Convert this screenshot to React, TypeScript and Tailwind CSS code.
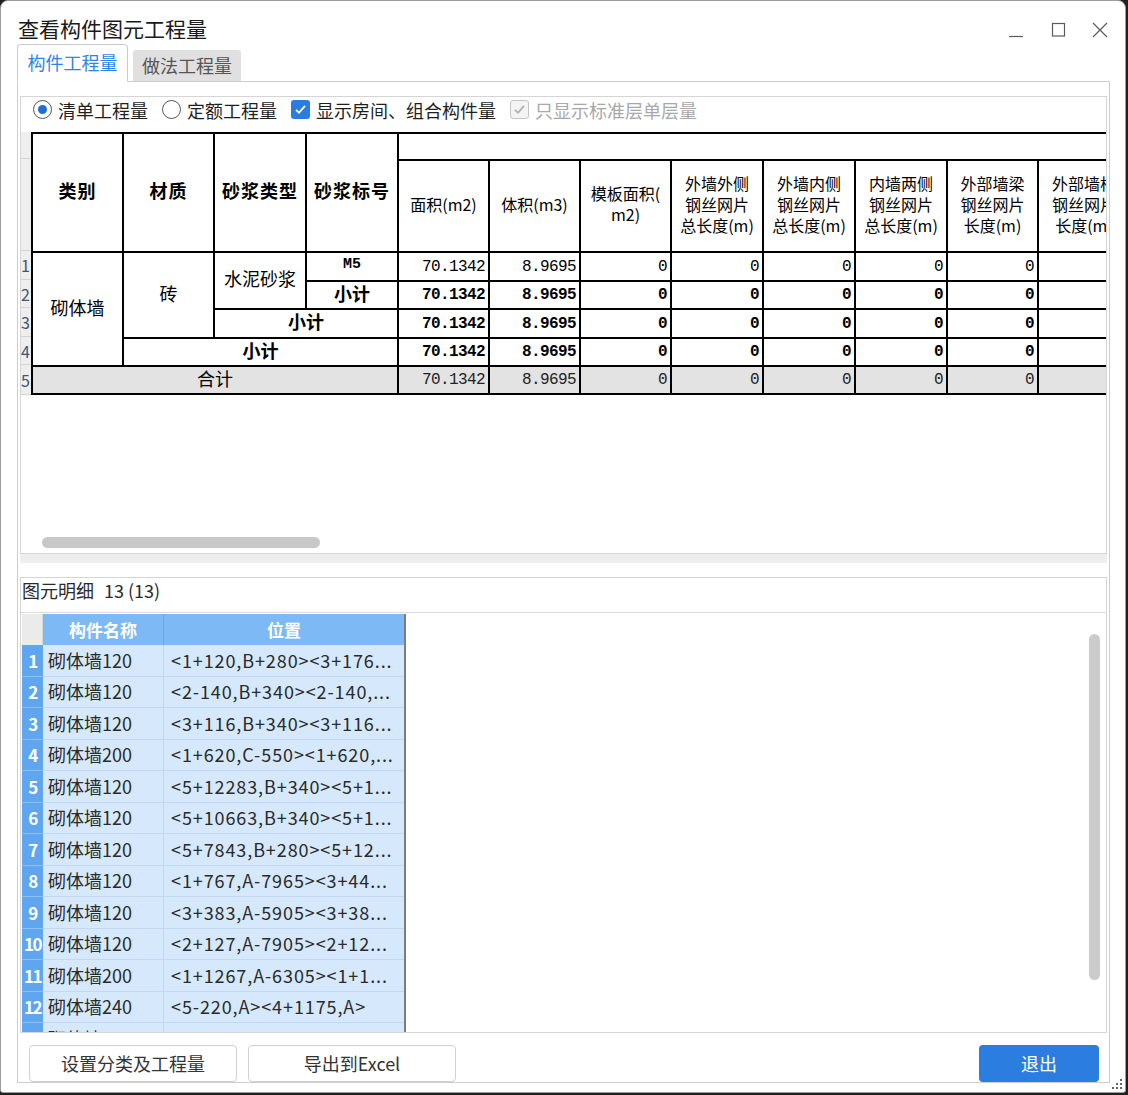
import React from 'react';

const gridCols = 'grid-cols-[89px_89px_90px_90px_89px_89px_89px_90px_90px_90px_89px_90px]';
const gridRows = 'grid-rows-[25px_90px_27px_26px_27px_26px_26px]';

const valueCols = ['col-start-5', 'col-start-6', 'col-start-7', 'col-start-8', 'col-start-9', 'col-start-10', 'col-start-11', 'col-start-12'];
const valueRows = ['row-start-3', 'row-start-4', 'row-start-5', 'row-start-6', 'row-start-7'];
const values = ['70.1342', '8.9695', '0', '0', '0', '0', '0', '0'];

const headCols: { col: string; lines: string[] }[] = [
  { col: 'col-start-5', lines: ['面积(m2)'] },
  { col: 'col-start-6', lines: ['体积(m3)'] },
  { col: 'col-start-7', lines: ['模板面积(', 'm2)'] },
  { col: 'col-start-8', lines: ['外墙外侧', '钢丝网片', '总长度(m)'] },
  { col: 'col-start-9', lines: ['外墙内侧', '钢丝网片', '总长度(m)'] },
  { col: 'col-start-10', lines: ['内墙两侧', '钢丝网片', '总长度(m)'] },
  { col: 'col-start-11', lines: ['外部墙梁', '钢丝网片', '长度(m)'] },
  { col: 'col-start-12', lines: ['外部墙柱', '钢丝网片', '长度(m)'] },
];

const details = [
  ['砌体墙120', '<1+120,B+280><3+176...'],
  ['砌体墙120', '<2-140,B+340><2-140,...'],
  ['砌体墙120', '<3+116,B+340><3+116...'],
  ['砌体墙200', '<1+620,C-550><1+620,...'],
  ['砌体墙120', '<5+12283,B+340><5+1...'],
  ['砌体墙120', '<5+10663,B+340><5+1...'],
  ['砌体墙120', '<5+7843,B+280><5+12...'],
  ['砌体墙120', '<1+767,A-7965><3+44...'],
  ['砌体墙120', '<3+383,A-5905><3+38...'],
  ['砌体墙120', '<2+127,A-7905><2+12...'],
  ['砌体墙200', '<1+1267,A-6305><1+1...'],
  ['砌体墙240', '<5-220,A><4+1175,A>'],
  ['砌体墙120', '<4+1175,A><5-220,...'],
];

function Radio({ checked, label }: { checked?: boolean; label: string }) {
  return (
    <div className="flex items-center gap-[6px]">
      <span className="w-[19px] h-[19px] rounded-full border border-[#555] bg-white flex items-center justify-center">
        {checked && <span className="w-[9px] h-[9px] rounded-full bg-[#1f6fd6]" />}
      </span>
      <span className="text-[18px] leading-[24px] text-[#1f1f1f]">{label}</span>
    </div>
  );
}

function Check({ label, disabled }: { label: string; disabled?: boolean }) {
  return (
    <div className="flex items-center gap-[6px]">
      <span
        className={
          disabled
            ? 'w-[19px] h-[19px] rounded-[3px] border border-[#c4c4c4] bg-[#f4f4f4] flex items-center justify-center'
            : 'w-[19px] h-[19px] rounded-[3px] bg-[#2b7be0] flex items-center justify-center'
        }
      >
        <svg width="13" height="13" viewBox="0 0 13 13" fill="none">
          <path d="M2 6.8l3 3 6-7" stroke={disabled ? '#b0b0b0' : '#ffffff'} strokeWidth="1.8" />
        </svg>
      </span>
      <span className={disabled ? 'text-[18px] leading-[24px] text-[#a8a8a8]' : 'text-[18px] leading-[24px] text-[#1f1f1f]'}>
        {label}
      </span>
    </div>
  );
}

function UpperGrid() {
  const cell = 'bg-white flex items-center justify-center text-black';
  const head = `${cell} text-[18px] font-bold tracking-[1px] pb-[5px]`;
  const cjk = `${cell} text-[18px] pb-[4px]`;
  const num = 'font-["Liberation_Mono",monospace] text-[16px] tracking-[-0.6px] flex items-center justify-end pr-[3px]';
  return (
    <div className={`grid ${gridCols} ${gridRows} gap-[2px] bg-black border-2 border-black shrink-0 w-max`}>
      <div className={`${head} col-start-1 row-start-1 row-span-2`}>类别</div>
      <div className={`${head} col-start-2 row-start-1 row-span-2`}>材质</div>
      <div className={`${head} col-start-3 row-start-1 row-span-2`}>砂浆类型</div>
      <div className={`${head} col-start-4 row-start-1 row-span-2`}>砂浆标号</div>
      <div className={`${cell} col-start-5 col-span-8 row-start-1`} />
      {headCols.map((h) => (
        <div key={h.col} className={`${cell} ${h.col} row-start-2 flex-col text-[16px] leading-[21px] pb-[4px]`}>
          {h.lines.map((l) => (
            <span key={l} className="whitespace-nowrap">{l}</span>
          ))}
        </div>
      ))}

      <div className={`${cjk} col-start-1 row-start-3 row-span-4`}>砌体墙</div>
      <div className={`${cjk} col-start-2 row-start-3 row-span-3`}>砖</div>
      <div className={`${cjk} col-start-3 row-start-3 row-span-2`}>水泥砂浆</div>
      <div className={`${cell} col-start-4 row-start-3 text-[15px] font-["Liberation_Mono",monospace] font-bold pb-[2px]`}>M5</div>
      <div className={`${cjk} col-start-4 row-start-4 font-bold`}>小计</div>
      <div className={`${cjk} col-start-3 col-span-2 row-start-5 font-bold`}>小计</div>
      <div className={`${cjk} col-start-2 col-span-3 row-start-6 font-bold`}>小计</div>
      <div className="bg-[#e3e3e3] flex items-center justify-center col-start-1 col-span-4 row-start-7 text-[18px] text-black pb-[4px]">合计</div>

      {valueRows.map((r, ri) =>
        valueCols.map((c, ci) => (
          <div
            key={r + c}
            className={`${num} ${r} ${c} ${ri === 4 ? 'bg-[#e3e3e3] text-[#222]' : 'bg-white text-black'} ${
              ri >= 1 && ri <= 3 ? 'font-bold' : ''
            }`}
          >
            {values[ci]}
          </div>
        ))
      )}
    </div>
  );
}

function RowNumbers() {
  const rows = [
    { h: 'h-[29px]', n: '1' },
    { h: 'h-[28px]', n: '2' },
    { h: 'h-[29px]', n: '3' },
    { h: 'h-[28px]', n: '4' },
    { h: 'h-[30px]', n: '5' },
  ];
  return (
    <div className="w-[10px] shrink-0 flex flex-col bg-[#eeeeee]">
      <div className="h-[27px] border-b border-[#d2d2d2]" />
      <div className="h-[92px] border-b border-[#d2d2d2]" />
      {rows.map((r) => (
        <div key={r.n} className={`${r.h} border-b border-[#d2d2d2] flex items-center text-[16px] leading-none text-[#3e5675]`}>
          {r.n}
        </div>
      ))}
    </div>
  );
}

function DetailTable() {
  return (
    <div className="w-[384px] shrink-0 ml-[1px] mt-[1px] flex flex-col border-r-2 border-[#7d7d7d]">
      <div className="flex h-[31px] shrink-0">
        <div className="w-[21px] bg-[#ebebeb] border-r border-[#d8d8d8]" />
        <div className="w-[121px] bg-[#7db9f5] border-r border-[#69a7e6] flex items-center justify-center text-white font-bold text-[17px]">
          构件名称
        </div>
        <div className="flex-1 bg-[#7db9f5] flex items-center justify-center text-white font-bold text-[17px]">位置</div>
      </div>
      {details.map(([name, pos], i) => (
        <div key={i} className="flex h-[31.5px] shrink-0">
          <div className="w-[21px] bg-[#5fa6ef] border-b border-[#8cc0f3] flex items-center justify-center text-white font-bold text-[17px] tracking-[-1.5px] leading-none">
            {i + 1}
          </div>
          <div className="w-[121px] bg-[#d6e9fc] border-r border-b border-[#c3d8ec] flex items-center pl-[5px] text-[18px] text-[#2a2a2a] whitespace-nowrap">
            {name}
          </div>
          <div className="flex-1 bg-[#d6e9fc] border-b border-[#c3d8ec] flex items-center pl-[7px] text-[18px] text-[#2a2a2a] tracking-[0.9px] whitespace-nowrap overflow-hidden">
            {pos}
          </div>
        </div>
      ))}
    </div>
  );
}

export default function App() {
  return (
    <div className="w-[1128px] h-[1095px] bg-[#202020] relative overflow-hidden font-['Noto_Sans_CJK_SC','Noto_Sans',sans-serif] text-[#222]">
      <div className="w-[1126px] h-[1093px] bg-white border border-[#9c9c9c] rounded-t-[8px] rounded-b-[3px] flex flex-col">
        {/* title bar */}
        <div className="h-[43px] shrink-0 flex items-end justify-between pl-[17px] pr-[17px]">
          <div className="text-[21px] leading-[28px] text-[#1a1a1a] pb-[2px]">查看构件图元工程量</div>
          <div className="flex items-end gap-[26px] pb-[6px]">
            <svg width="16" height="16" viewBox="0 0 16 16" fill="none">
              <path d="M1 14.5h14" stroke="#5a5a5a" strokeWidth="1.2" />
            </svg>
            <svg width="16" height="16" viewBox="0 0 16 16" fill="none">
              <rect x="2.5" y="1.5" width="12" height="12.5" stroke="#5a5a5a" strokeWidth="1.2" />
            </svg>
            <svg width="16" height="16" viewBox="0 0 16 16" fill="none">
              <path d="M1 1l14 14M15 1L1 15" stroke="#5a5a5a" strokeWidth="1.2" />
            </svg>
          </div>
        </div>

        {/* tabs */}
        <div className="h-[37px] shrink-0 flex items-end pl-[16px] gap-[5px] relative z-10">
          <div className="w-[111px] h-[38px] -mb-px bg-white border border-[#cbcbcb] border-b-white rounded-t-[4px] flex items-center justify-center text-[18px] text-[#2d84e8] pb-[1px]">
            构件工程量
          </div>
          <div className="w-[108px] h-[31px] bg-[#e0e0e0] rounded-t-[3px] flex items-center justify-center text-[18px] text-[#555] pb-[1px]">
            做法工程量
          </div>
        </div>

        {/* main panel */}
        <div className="ml-[16px] w-[1093px] h-[1002px] shrink-0 border border-[#cdcdcd] flex flex-col pt-[14px] px-[2px]">
          {/* upper quantities */}
          <div className="h-[458px] shrink-0 border border-[#d5d5d5] flex flex-col overflow-hidden">
            <div className="h-[35px] shrink-0 flex items-center pl-[12px] pb-[10px] gap-[14px]">
              <Radio checked label="清单工程量" />
              <Radio label="定额工程量" />
              <Check label="显示房间、组合构件量" />
              <Check disabled label="只显示标准层单层量" />
            </div>
            <div className="flex items-start overflow-hidden shrink-0">
              <RowNumbers />
              <UpperGrid />
            </div>
            <div className="flex-1" />
            <div className="pl-[21px] pb-[5px]">
              <div className="w-[278px] h-[11px] rounded-full bg-[#c8c8c8]" />
            </div>
          </div>

          {/* splitter */}
          <div className="h-[23px] shrink-0 flex flex-col">
            <div className="h-[9px] bg-[#eeeeee]" />
          </div>

          {/* details */}
          <div className="h-[456px] shrink-0 border border-[#d5d5d5] flex flex-col overflow-hidden">
            <div className="h-[35px] shrink-0 border-b border-[#dcdcdc] flex items-center pl-[1px] pb-[10px] text-[18px] text-[#2a2a2a]">
              <span>图元明细</span>
              <span className="ml-[10px]">13 (13)</span>
            </div>
            <div className="flex-1 flex overflow-hidden">
              <DetailTable />
              <div className="flex-1" />
              <div className="pt-[21px] pr-[6px]">
                <div className="w-[11px] h-[346px] rounded-full bg-[#cbcbcb]" />
              </div>
            </div>
          </div>

          {/* buttons */}
          <div className="flex-1 flex items-end justify-between pl-[9px] pr-[8px]">
            <div className="flex gap-[11px]">
              <button className="w-[208px] h-[37px] border border-[#d0d0d0] rounded-[4px] bg-white text-[18px] text-[#333]">
                设置分类及工程量
              </button>
              <button className="w-[208px] h-[37px] border border-[#d0d0d0] rounded-[4px] bg-white text-[18px] text-[#333]">
                导出到Excel
              </button>
            </div>
            <button className="w-[120px] h-[37px] rounded-[4px] bg-[#2b7de0] text-[18px] text-white">退出</button>
          </div>
        </div>
      </div>

      {/* resize grip */}
      <div className="absolute right-[6px] bottom-[6px] grid grid-cols-3 gap-[2px]">
        <span className="w-[2px] h-[2px]" />
        <span className="w-[2px] h-[2px]" />
        <span className="w-[2px] h-[2px] bg-[#666]" />
        <span className="w-[2px] h-[2px]" />
        <span className="w-[2px] h-[2px] bg-[#666]" />
        <span className="w-[2px] h-[2px] bg-[#666]" />
        <span className="w-[2px] h-[2px] bg-[#666]" />
        <span className="w-[2px] h-[2px] bg-[#666]" />
        <span className="w-[2px] h-[2px] bg-[#666]" />
      </div>
    </div>
  );
}
